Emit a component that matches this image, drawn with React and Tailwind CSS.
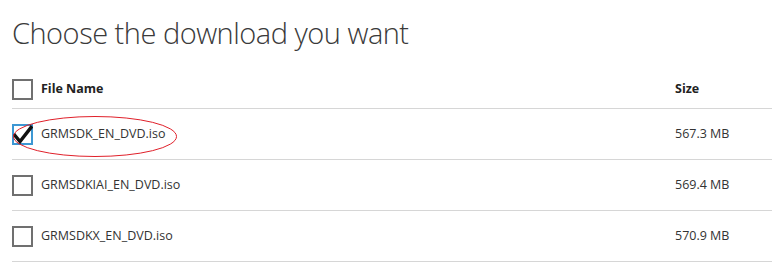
const files = [
  { name: "GRMSDK_EN_DVD.iso", size: "567.3 MB", checked: true },
  { name: "GRMSDKIAI_EN_DVD.iso", size: "569.4 MB" },
  { name: "GRMSDKX_EN_DVD.iso", size: "570.9 MB" },
];

function Box({ checked }) {
  return (
    <div
      className={`relative w-[21px] h-[21px] shrink-0 border-2 ${
        checked ? "border-[#3c97d3]" : "border-[#707070]"
      }`}
    >
      {checked && (
        <svg
          className="absolute left-[-1px] top-[-1px] w-[20px] h-[20px]"
          viewBox="0 0 20 20"
        >
          <path
            d="M2 10.5 L7 16.5 L18 2.5"
            fill="none"
            stroke="#111"
            strokeWidth="3.4"
            strokeLinecap="square"
          />
        </svg>
      )}
    </div>
  );
}

export default function App() {
  return (
    <div className="w-[772px] h-[275px] bg-white pl-3 font-['Open_Sans',sans-serif] text-[#333] overflow-hidden">
      <h1 className="pt-[13px] text-[29px] leading-[40px] font-light text-[#3a3a3a] tracking-[-0.5px]">
        Choose the download you want
      </h1>

      <div className="mt-[23px]">
        <div className="flex items-center h-[26px] border-b border-[#d6d6d6] pb-[6px] box-content">
          <Box />
          <div className="ml-2 flex-1 text-[12.5px] font-bold text-[#222]">File Name</div>
          <div className="w-[97px] text-[12.5px] font-bold text-[#222]">Size</div>
        </div>

        {files.map((f, i) => (
          <div
            key={i}
            className="relative flex items-center h-[51px] border-b border-[#d6d6d6]"
          >
            <Box checked={f.checked} />
            <div className="ml-2 flex-1 text-[12.5px] text-[#333]">{f.name}</div>
            <div className="w-[97px] text-[12.5px] text-[#333]">{f.size}</div>
            {f.checked && (
              <svg
                className="absolute left-[1px] top-[7px] w-[164px] h-[41px] pointer-events-none"
                viewBox="0 0 164 41"
              >
                <ellipse
                  cx="82"
                  cy="20.5"
                  rx="81.5"
                  ry="20"
                  fill="none"
                  stroke="#e0202a"
                  strokeWidth="1"
                />
              </svg>
            )}
          </div>
        ))}
      </div>
    </div>
  );
}
